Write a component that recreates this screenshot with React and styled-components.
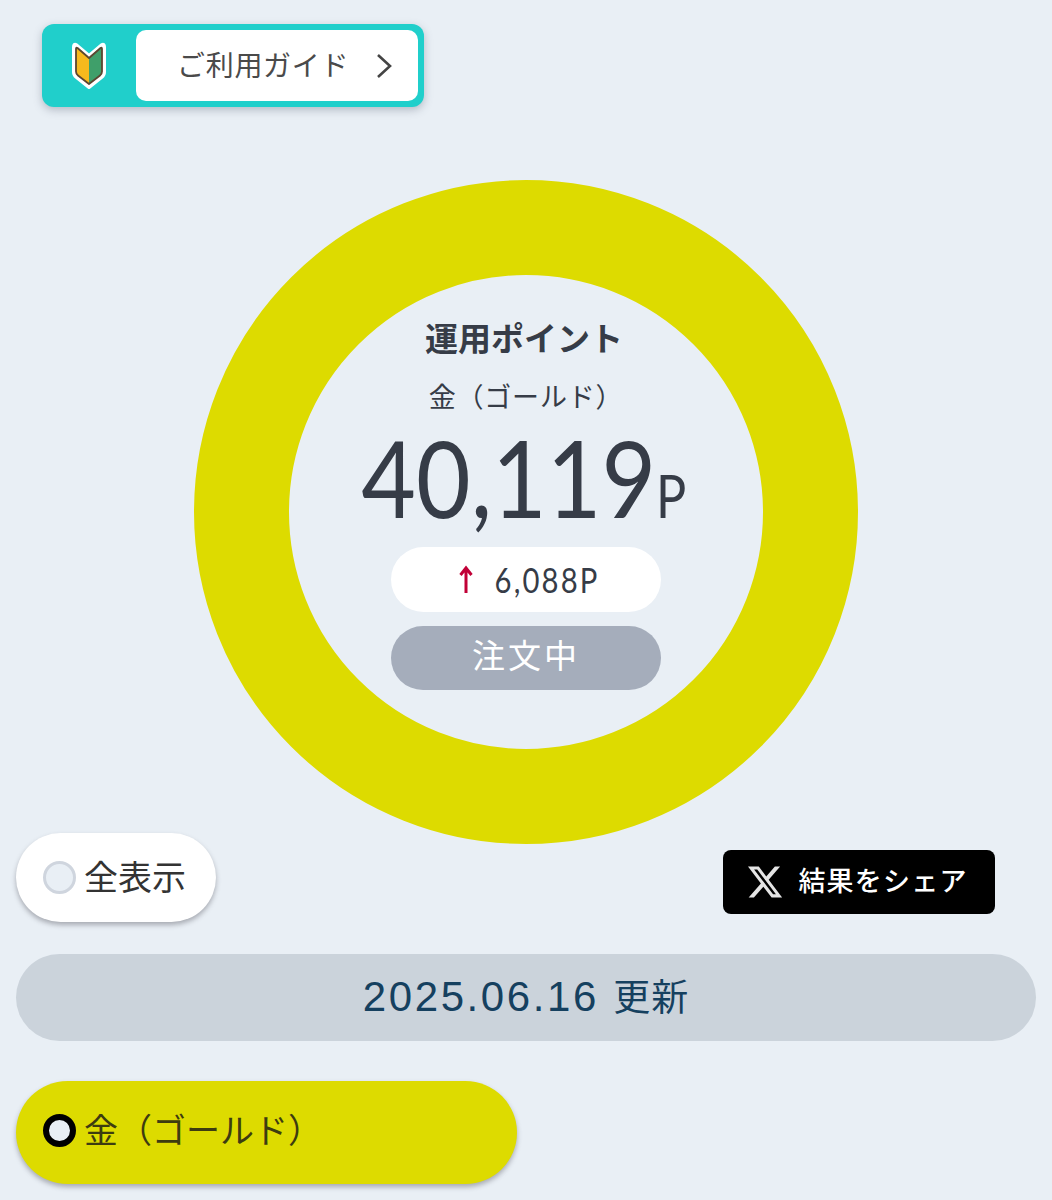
import React from 'react';
import styled, { createGlobalStyle } from 'styled-components';

const JP = `"Noto Sans CJK JP", "Noto Sans", sans-serif`;
const NUM = `Lato, Roboto, "Noto Sans CJK JP", sans-serif`;

const GlobalStyle = createGlobalStyle`
  html, body {
    margin: 0;
    padding: 0;
    background: #e9eff5;
  }
  body {
    font-family: ${JP};
  }
`;

const Page = styled.div`
  width: 1052px;
  height: 1200px;
  overflow: hidden;
  padding: 24px 16px 0;
  box-sizing: border-box;
  display: flex;
  flex-direction: column;
`;

const GuideButton = styled.div`
  width: 382px;
  height: 83px;
  margin-left: 26px;
  box-sizing: border-box;
  padding: 6px 6px 6px 0;
  display: flex;
  background: #20cfcb;
  border-radius: 12px;
  box-shadow: 0 3px 8px rgba(80, 90, 110, 0.35);
`;

const MarkSlot = styled.div`
  width: 94px;
  display: flex;
  align-items: center;
  justify-content: center;
`;

const GuideLabel = styled.div`
  flex: 1;
  background: #fff;
  border-radius: 10px;
  display: flex;
  align-items: center;
  justify-content: space-between;
  padding: 0 26px 0 41px;
  font-size: 28px;
  letter-spacing: 0.7px;
  color: #4a4a4a;
`;

const Lifted = styled.span`
  display: block;
  padding-bottom: ${({ $by }) => $by || 5}px;
`;

const DonutWrap = styled.div`
  display: flex;
  justify-content: center;
  margin-top: 73px;
`;

const Donut = styled.div`
  width: 664px;
  height: 664px;
  box-sizing: border-box;
  border: 95px solid #dddb00;
  border-radius: 50%;
  display: flex;
  flex-direction: column;
  align-items: center;
  padding-top: 39px;
  color: #363c47;
`;

const DonutTitle = styled.div`
  padding-right: 4px;
  font-size: 33px;
  line-height: 46px;
  font-weight: 700;
`;

const DonutSub = styled.div`
  margin-top: 17px;
  font-size: 27px;
  line-height: 38px;
  letter-spacing: 0.8px;
  white-space: nowrap;
`;

const Amount = styled.div`
  margin-top: 6px;
  height: 112px;
  display: flex;
  align-items: baseline;
  font-family: ${NUM};
  font-weight: 400;
  line-height: 112px;
  white-space: nowrap;
`;

const AmountValue = styled.span`
  display: inline-block;
  font-size: 106px;
  margin: 0 -20px;
  transform: scaleX(0.89);
`;

const AmountUnit = styled.span`
  display: inline-block;
  font-size: 60px;
  margin-left: -2px;
  transform: scaleX(0.84);
`;

const Pill = styled.div`
  width: 270px;
  height: ${({ $h }) => $h}px;
  border-radius: 33px;
  display: flex;
  align-items: center;
  justify-content: center;
  background: ${({ $bg }) => $bg};
`;

const DiffPill = styled(Pill)`
  margin-top: 14px;
  box-sizing: border-box;
  padding-left: 8px;
  gap: 18px;
  font-family: ${NUM};
  font-weight: 400;
  font-size: 34px;
  color: #363c47;
`;

const DiffValue = styled.span`
  display: inline-block;
  letter-spacing: 2.500px;
  margin: 0 -6px;
  transform: scaleX(0.86);
`;

const StatusPill = styled(Pill)`
  margin-top: 14px;
  font-size: 33px;
  letter-spacing: 3px;
  color: #fff;
`;

const ActionRow = styled.div`
  margin-top: -11px;
  height: 89px;
  display: flex;
  justify-content: space-between;
  padding-right: 41px;
`;

const RadioPill = styled.div`
  border-radius: 52px;
  box-sizing: border-box;
  display: flex;
  align-items: center;
  gap: 8px;
  padding-left: 27px;
  font-size: 34px;
  color: ${({ $fg }) => $fg};
  background: ${({ $bg }) => $bg};
  width: ${({ $w }) => $w}px;
  height: ${({ $h }) => $h}px;
  padding-bottom: ${({ $lift }) => $lift}px;
  box-shadow: 0 3px 5px rgba(70, 70, 80, 0.4);
`;

const Radio = styled.span`
  flex: none;
  width: 33px;
  height: 33px;
  box-sizing: border-box;
  border-radius: 50%;
  background: #e9eff5;
  border: ${({ $on }) => ($on ? '6px solid #000' : '3px solid #cfd5de')};
`;

const ShareButton = styled.div`
  margin-top: 17px;
  width: 272px;
  height: 64px;
  box-sizing: border-box;
  padding-right: 4px;
  border-radius: 8px;
  background: #000;
  color: #fff;
  display: flex;
  align-items: center;
  justify-content: center;
  gap: 14px;
  font-size: 27px;
  font-weight: 500;
  letter-spacing: 1.2px;
`;

const UpdatedBar = styled.div`
  margin-top: 32px;
  height: 87px;
  border-radius: 44px;
  background: #cbd3db;
  color: #15405f;
  display: flex;
  align-items: center;
  justify-content: center;
  font-family: "Liberation Sans", "Noto Sans CJK JP", sans-serif;
  font-size: 42px;
  letter-spacing: 2.600px;
`;

const UpdatedSuffix = styled.span`
  font-family: ${JP};
  font-size: 37px;
  letter-spacing: 1px;
`;

const GoldRow = styled.div`
  margin-top: 40px;
`;

const BeginnerMark = () => (
  <svg width="34" height="50" viewBox="0 0 34 50">
    <path d="M4 4 L17 15 L30 4 Q32 3 32 6 L32 31 Q32 34 29.500 36 L17 46 L4.500 36 Q2 34 2 31 L2 6 Q2 3 4 4 Z" fill="#ffffff" stroke="#ffffff" strokeWidth="4" strokeLinejoin="round" />
    <path d="M17 17 L17 43 L6 34.500 Q4 33 4 30.500 L4 8 Q4 6 5.500 7 Z" fill="#f6b91d" />
    <path d="M17 17 L17 43 L28 34.500 Q30 33 30 30.500 L30 8 Q30 6 28.500 7 Z" fill="#3f9f6a" />
    <path d="M5.500 7 L17 17 L28.500 7 Q30 6 30 8 L30 30.500 Q30 33 28 34.500 L17 43 L6 34.500 Q4 33 4 30.500 L4 8 Q4 6 5.500 7 Z" fill="none" stroke="#5a4630" strokeWidth="1.800" strokeLinejoin="round" />
  </svg>
);

const Chevron = () => (
  <svg width="16" height="26" viewBox="0 0 16 26">
    <path d="M2 2 L14 13 L2 24" fill="none" stroke="#444" strokeWidth="2.600" />
  </svg>
);

const UpArrow = () => (
  <svg width="16" height="30" viewBox="0 0 16 30">
    <path d="M8 28 L8 3 M2.500 10 L8 3 L13.500 10" fill="none" stroke="#c10037" strokeWidth="3" />
  </svg>
);

const XLogo = () => (
  <svg width="38" height="38" viewBox="0 0 24 24">
    <path fill="#e4e4e4" d="M18.244 2.25h3.308l-7.227 8.26 8.502 11.24H16.17l-5.214-6.817L4.99 21.75H1.68l7.73-8.835L1.254 2.25H8.08l4.713 6.231zm-1.161 17.52h1.833L7.084 4.126H5.117z" />
  </svg>
);

const App = () => {
  return (
    <Page>
      <GlobalStyle />
      <GuideButton>
        <MarkSlot>
          <BeginnerMark />
        </MarkSlot>
        <GuideLabel>
          <Lifted $by={4}>ご利用ガイド</Lifted>
          <Chevron />
        </GuideLabel>
      </GuideButton>

      <DonutWrap>
        <Donut>
          <DonutTitle>運用ポイント</DonutTitle>
          <DonutSub>金（ゴールド）</DonutSub>
          <Amount>
            <AmountValue>40,119</AmountValue>
            <AmountUnit>P</AmountUnit>
          </Amount>
          <DiffPill $h={65} $bg="#ffffff">
            <UpArrow />
            <DiffValue>6,088P</DiffValue>
          </DiffPill>
          <StatusPill $h={64} $bg="#a5adbb">
            <Lifted $by={8}>注文中</Lifted>
          </StatusPill>
        </Donut>
      </DonutWrap>

      <ActionRow>
        <RadioPill $w={200} $h={89} $lift={0} $bg="#ffffff" $fg="#333">
          <Radio />
          <Lifted>全表示</Lifted>
        </RadioPill>
        <ShareButton>
          <XLogo />
          <Lifted $by={6}>結果をシェア</Lifted>
        </ShareButton>
      </ActionRow>

      <UpdatedBar>
        <Lifted $by={6}>
          2025.06.16 <UpdatedSuffix>更新</UpdatedSuffix>
        </Lifted>
      </UpdatedBar>

      <GoldRow>
        <RadioPill $w={501} $h={103} $lift={4} $bg="#dddb00" $fg="#3d3c10">
          <Radio $on />
          <Lifted>金（ゴールド）</Lifted>
        </RadioPill>
      </GoldRow>
    </Page>
  );
};

export default App;
